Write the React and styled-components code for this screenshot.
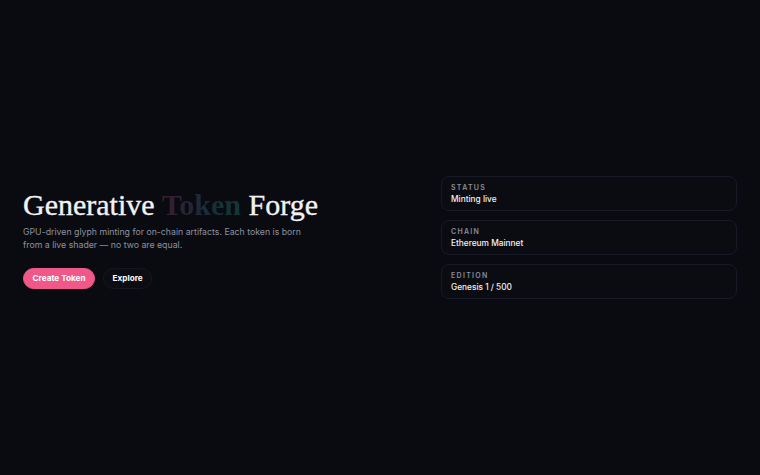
import React from "react";
import styled, { createGlobalStyle } from "styled-components";

const Global = createGlobalStyle`
  html, body { margin: 0; padding: 0; background: #0a0b10; }
  body { font-family: Inter, "Noto Sans", sans-serif; color: #e8e9ee; }
  * { box-sizing: border-box; }
`;

const Page = styled.main`
  min-height: 100vh;
  display: flex;
  align-items: center;
  padding: 0 23px;
`;

const Grid = styled.div`
  width: 100%;
  display: grid;
  grid-template-columns: 1.25fr 1fr;
  gap: 48px;
  align-items: center;
`;

const Hero = styled.section`
  display: flex;
  flex-direction: column;
`;

const Title = styled.h1`
  margin: 0;
  font-family: "Liberation Serif", "Times New Roman", serif;
  font-weight: 400;
  font-size: 30px;
  line-height: 36px;
  color: #f2f2f5;
  -webkit-text-stroke: 0.35px #f2f2f5;
`;

const Gradient = styled.span`
  background: linear-gradient(90deg, #3a1c2d 0%, #1c2a3a 50%, #103833 100%);
  -webkit-background-clip: text;
  background-clip: text;
  color: transparent;
  -webkit-text-stroke: 0;
  font-weight: 700;
`;

const Lede = styled.p`
  margin: 3px 0 0;
  max-width: 282px;
  font-size: 8.75px;
  line-height: 13px;
  color: #8d91a0;
`;

const Actions = styled.div`
  display: flex;
  gap: 8px;
  margin-top: 16px;
`;

const Button = styled.button`
  height: 21px;
  padding: 0 8.5px;
  border-radius: 999px;
  font-family: Inter, "Noto Sans", sans-serif;
  font-size: 8.2px;
  font-weight: 700;
  color: #ffffff;
  cursor: pointer;
  background: ${(p) => (p.$primary ? "#f0588a" : "#0c0d13")};
  border: 1px solid ${(p) => (p.$primary ? "#f0588a" : "#17181f")};
`;

const Cards = styled.aside`
  display: flex;
  flex-direction: column;
  gap: 9px;
`;

const Card = styled.div`
  height: 35px;
  padding: 6px 9px 0;
  border-radius: 8px;
  background: #0b0c12;
  border: 1px solid #181a27;
  display: flex;
  flex-direction: column;
  gap: 1px;
`;

const Label = styled.div`
  font-size: 7px;
  line-height: 10px;
  font-weight: 600;
  letter-spacing: 1.3px;
  text-transform: uppercase;
  color: #8a8c98;
`;

const Value = styled.div`
  font-size: 8.3px;
  line-height: 11px;
  font-weight: 500;
  color: #f2f2f5;
`;

const info = [
  ["Status", "Minting live"],
  ["Chain", "Ethereum Mainnet"],
  ["Edition", "Genesis 1 / 500"],
];

export default function App() {
  return (
    <>
      <Global />
      <Page>
        <Grid>
          <Hero>
            <Title>
              Generative <Gradient>Token</Gradient> Forge
            </Title>
            <Lede>
              GPU-driven glyph minting for on-chain artifacts. Each token is born
              from a live shader — no two are equal.
            </Lede>
            <Actions>
              <Button $primary>Create Token</Button>
              <Button>Explore</Button>
            </Actions>
          </Hero>
          <Cards>
            {info.map(([l, v]) => (
              <Card key={l}>
                <Label>{l}</Label>
                <Value>{v}</Value>
              </Card>
            ))}
          </Cards>
        </Grid>
      </Page>
    </>
  );
}
